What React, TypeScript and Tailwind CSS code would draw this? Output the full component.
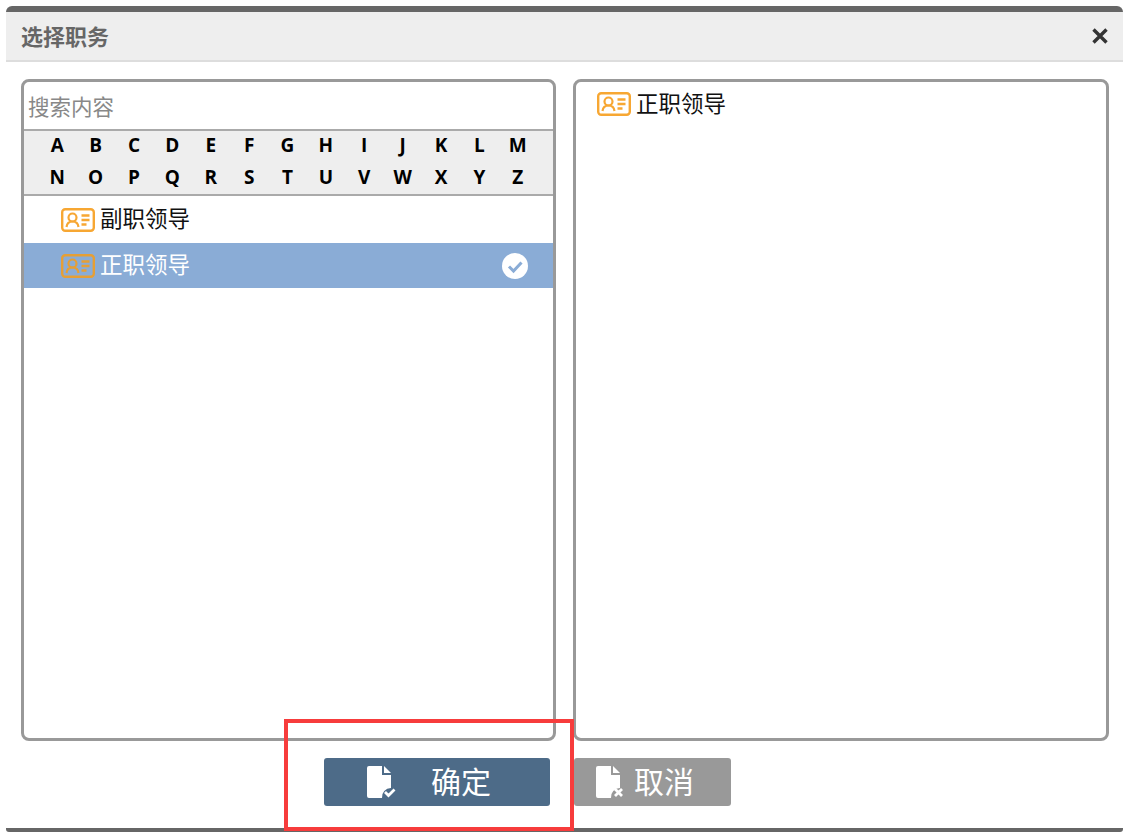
const FONT = "font-['Open_Sans','Noto_Sans_CJK_SC',sans-serif]";

const LETTERS = "ABCDEFGHIJKLMNOPQRSTUVWXYZ".split("");

function BadgeIcon({ color = "#f7a733" }: { color?: string }) {
  return (
    <svg width="34" height="24" viewBox="0 0 34 24" fill="none" className="shrink-0">
      <rect x="1.200" y="1.200" width="31.600" height="21.600" rx="3" stroke={color} strokeWidth="2.400" />
      <circle cx="11.500" cy="9.500" r="4" stroke={color} strokeWidth="2.200" />
      <path d="M5.500 19c.4-3.400 2.800-5.500 6-5.500s5.600 2.100 6 5.500" stroke={color} strokeWidth="2.200" />
      <path d="M20.500 7.500h8M20.500 12h8M20.500 16.500h5" stroke={color} strokeWidth="2.400" />
    </svg>
  );
}

function FileIcon({ mark }: { mark: "check" | "cross" }) {
  return (
    <svg width="30" height="34" viewBox="0 0 30 34" className="shrink-0">
      <path d="M3 1h13v9h9v13a9 9 0 0 0-9 10H3a2 2 0 0 1-2-2V3a2 2 0 0 1 2-2z" fill="#fff" />
      <path d="M18 1l7 7h-7z" fill="#fff" />
      {mark === "check" ? (
        <path d="M19 27l3.500 3.500 6-6" stroke="#fff" strokeWidth="2.800" fill="none" />
      ) : (
        <path d="M20 24l7 7M27 24l-7 7" stroke="#fff" strokeWidth="2.800" fill="none" />
      )}
    </svg>
  );
}

function Row({ label, selected }: { label: string; selected?: boolean }) {
  return (
    <div
      className={
        selected
          ? "flex h-[45px] items-center gap-[5px] bg-[#8aacd6] pl-[37px] pr-[25px] text-white"
          : "flex h-[47px] items-center gap-[5px] pl-[37px] pr-[25px] text-[#111]"
      }
    >
      <BadgeIcon color={selected ? "#e69f35" : "#f7a733"} />
      <span className="flex-1 text-[22.500px] leading-none">{label}</span>
      {selected && (
        <svg width="26" height="26" viewBox="0 0 26 26">
          <circle cx="13" cy="13" r="13" fill="#fff" />
          <path d="M7 13.500l4.500 4.500 8-8.500" stroke="#8aacd6" strokeWidth="3" fill="none" />
        </svg>
      )}
    </div>
  );
}

export default function App() {
  return (
    <div className={`relative flex h-[838px] w-[1130px] flex-col bg-white pb-[6px] pl-[6px] pr-[7px] pt-[6px] ${FONT}`}>
      <div className="flex flex-1 flex-col rounded-t-[6px] rounded-b-[3px] border-b-[4px] border-t-[6px] border-[#666]">
        <div className="flex h-[50px] shrink-0 items-center justify-between border-b-2 border-[#ddd] bg-[#eeeeee] pl-[15px] pr-[14px]">
          <span className="text-[22px] font-bold leading-none text-[#666]">选择职务</span>
          <svg width="18" height="18" viewBox="0 0 18 18">
            <path d="M2.500 2.500l13 13M15.500 2.500l-13 13" stroke="#333" strokeWidth="3.400" />
          </svg>
        </div>

        <div className="flex flex-1 gap-[17px] pl-[15px] pr-[14px] pt-[17px]">
          <div className="h-[662px] w-[535px] rounded-[8px] border-[3px] border-[#999] bg-white">
            <div className="flex h-[47px] items-center pl-[4px] pt-[2px] text-[21.500px] leading-none text-[#888]">搜索内容</div>
            <div className="grid h-[67px] grid-cols-13 content-center gap-y-[9px] border-y-2 border-[#aaa] bg-[#eeeeee] pl-[14px] pr-[16px] pb-[2px]">
              {LETTERS.map((letter) => (
                <span key={letter} className="text-center text-[19px] font-bold leading-[23px] text-black">
                  {letter}
                </span>
              ))}
            </div>
            <Row label="副职领导" />
            <Row label="正职领导" selected />
          </div>

          <div className="h-[662px] w-[536px] rounded-[8px] border-[3px] border-[#999] bg-white">
            <div className="flex items-center gap-[5px] pl-[21px] pt-[10px] text-[#111]">
              <BadgeIcon />
              <span className="text-[22.500px] leading-none">正职领导</span>
            </div>
          </div>
        </div>

        <div className="flex h-[87px] shrink-0 items-start pl-[318px] pt-[17px]">
          <button className="flex h-[48px] w-[226px] items-center rounded-[3px] bg-[#4d6b88] pl-[42px] text-[30px] leading-none text-white">
            <FileIcon mark="check" />
            <span className="ml-[35px]">确定</span>
          </button>
          <button className="ml-[24px] flex h-[48px] w-[157px] items-center rounded-[3px] bg-[#999999] pl-[21px] text-[30px] leading-none text-white">
            <FileIcon mark="cross" />
            <span className="ml-[9px]">取消</span>
          </button>
        </div>
      </div>

      <div className="absolute left-[284px] top-[719px] h-[112px] w-[290px] border-[4px] border-[#f73c3c]" />
    </div>
  );
}
